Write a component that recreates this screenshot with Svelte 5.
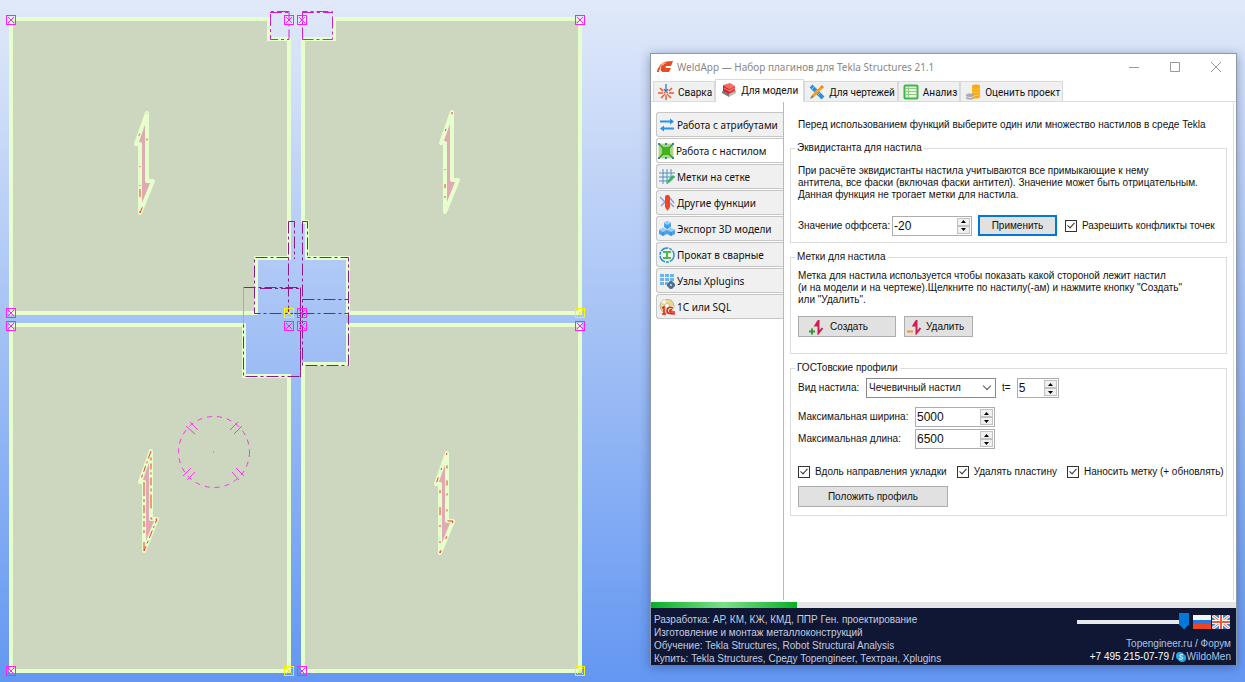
<script>
	const handles = [
		[11, 20, "m"],
		[289, 20, "m"],
		[302, 20, "m"],
		[580, 20, "m"],
		[11, 313, "m"],
		[289, 313, "y"],
		[302, 313, "m"],
		[580, 313, "y"],
		[11, 326, "m"],
		[289, 326, "m"],
		[302, 326, "m"],
		[580, 326, "m"],
		[11, 671, "m"],
		[289, 671, "y"],
		[302, 671, "m"],
		[580, 671, "y"],
	]

	const plates = [
		"M11 19H269V39H289V258H256V313H11Z",
		"M334 19H580V313H348V258H307V222H303V39H334Z",
		"M11 325H244V376H289V671H11Z",
		"M348 325H580V671H303V364H348Z",
	]

	const arrows = [
		{x: 147, y: 113, dash: "0 22 2 35 1 18 1 3 8 14 8 75 2 25 6 200"},
		{x: 452, y: 112, dash: "0 18 2 43 1 14 4 8 2 120 6 3 24 2 12 3 8 200"},
		{x: 151, y: 451, dash: "8 3 2 3 6 3 3 9 14 3 3 3"},
		{x: 447, y: 453, dash: "2 14 2 8 5 12 3 14 8 10"},
	]

	const tabs = [
		{id: "weld", label: "Сварка"},
		{id: "model", label: "Для модели"},
		{id: "drawing", label: "Для чертежей"},
		{id: "analysis", label: "Анализ"},
		{id: "estimate", label: "Оценить проект"},
	]

	const sections = [
		{id: "attributes", label: "Работа с атрибутами"},
		{id: "deck", label: "Работа с настилом"},
		{id: "grid", label: "Метки на сетке"},
		{id: "other", label: "Другие функции"},
		{id: "export", label: "Экспорт 3D модели"},
		{id: "rolled", label: "Прокат в сварные"},
		{id: "nodes", label: "Узлы Xplugins"},
		{id: "sql", label: "1С или SQL"},
	]

	let activeTab = $state("model")
	let activeSection = $state("deck")
	let values = $state({offset: -20, thickness: 5, width: 5000, length: 6500})
	let resolveConflicts = $state(true)
	let alongLaying = $state(true)
	let removePlate = $state(true)
	let applyMark = $state(true)
	let deckType = $state("lentil")
	let opacity = $state(100)
	let progress = $state(25)
</script>

{#snippet icon(id)}
	<svg class="icon" viewBox="0 0 16 16" aria-hidden="true">
		{#if id === "weld"}
			<path d="M8 0V7M6 5L8 8L10 5" stroke="#2f7fc0" stroke-width="1.300" fill="none" />
			<path
				d="M0 9H5M11 9H16M2 4L5 7M14 4L11 7M3 14L6 11M13 14L10 11M8 12V16"
				stroke="#f4552d"
				stroke-width="1.500"
			/>
			<circle cx="8" cy="9.500" r="1.800" fill="none" stroke="#f4552d" />
		{:else if id === "model"}
			<path d="M1 9L8 6L15 9L8 14Z" fill="#a3a3a3" />
			<path d="M1 9L8 12V15L1 11Z" fill="#777" />
			<path d="M8 12L15 9V11L8 15Z" fill="#bbb" />
			<path d="M2 3L9 1L14 4L8 7Z" fill="#f96a62" />
			<path d="M2 3L8 7V12L2 9Z" fill="#c9272d" />
			<path d="M8 7L14 4V9L8 12Z" fill="#e53e3e" />
			<path d="M3 6L8 9L14 6" stroke="#fb8984" fill="none" />
		{:else if id === "drawing"}
			<path d="M2 2L14 14" stroke="#2a91e0" stroke-width="4" />
			<path d="M3 5L5 3M6 8L8 6M9 11L11 9" stroke="#8cc8f5" />
			<path d="M14 2L4 12" stroke="#f8a019" stroke-width="3" />
			<path d="M3 11L5 13L1 15Z" fill="#697684" />
			<path d="M12 2L14 4" stroke="#fa6f5b" stroke-width="1.500" />
		{:else if id === "analysis"}
			<rect x="1.500" y="1.500" width="13" height="13" rx="1" fill="#eaf3dc" stroke="#43b649" stroke-width="2" />
			<path d="M5.500 2V14M2 4.500H14M2 7.500H14M2 10.500H14" stroke="#8ecb86" />
		{:else if id === "estimate"}
			<path d="M7 2C7 0 15 0 15 2V13C15 15 7 15 7 13Z" fill="#fbaa13" />
			<path d="M7 4C8 6 14 6 15 4M7 7C8 9 14 9 15 7M7 10C8 12 14 12 15 10" fill="none" stroke="#ffd148" />
			<path d="M1 11C1 9 9 9 9 11V14C9 16 1 16 1 14Z" fill="#a9abae" />
			<path d="M1 12C2 14 8 14 9 12" fill="none" stroke="#e5e5e5" />
		{:else if id === "attributes"}
			<path d="M1 4.500H12M4 11.500H15" stroke="#2492ef" stroke-width="2" />
			<path d="M11 1.500L15 4.500L11 7.500ZM5 8.500L1 11.500L5 14.500Z" fill="#2492ef" />
		{:else if id === "deck"}
			<rect x="1" y="1" width="14" height="14" fill="#a5d87e" stroke="#b7d9a2" />
			<rect x="4" y="4" width="8" height="8" fill="#44b321" />
			<path d="M1 1L15 15M15 1L1 15" stroke="#3a9c26" stroke-width="1.500" />
			<rect x="5" y="5" width="6" height="6" fill="#44b321" />
			<path d="M0 0H2V2H0ZM14 0H16V2H14ZM0 14H2V16H0ZM14 14H16V16H14ZM7 0H9V2H7ZM7 14H9V16H7Z" fill="#3181a5" />
		{:else if id === "grid"}
			<path d="M4 0V15M8 0V15M12 0V9M0 4H16M0 8H16M0 12H9" stroke="#4f91bd" />
			<path d="M8 15L9 11L14 6L16 8L11 13Z" fill="#3cb35d" />
		{:else if id === "other"}
			<path d="M1 2L7 8M15 12L11 8M2 11L6 7M11 3L15 8" stroke="#969bd2" stroke-width="1.500" />
			<rect x="6" y="0" width="5" height="11" rx="2" fill="#f44426" />
			<path d="M6 9H11V12L8.500 16L6 12Z" fill="#f44426" />
		{:else if id === "export"}
			<path d="M5 2L8 0L12 2V6L8 8L5 6ZM0 9L4 7L8 9V13L4 15L0 13ZM8 9L12 7L16 9V13L12 15L8 13Z" fill="#4aa2e8" />
			<path d="M5 2L8 4L12 2L8 0ZM0 9L4 11L8 9L4 7ZM8 9L12 11L16 9L12 7Z" fill="#99d0fb" />
			<path d="M8 4V8M4 11V15M12 11V15" stroke="#2f7fc8" stroke-width="0.700" />
		{:else if id === "rolled"}
			<circle cx="8" cy="8" r="7" fill="none" stroke="#2492d8" stroke-width="1.500" stroke-dasharray="8 1 3 1" />
			<path d="M4 4H12V6H9V10H12V12H4V10H7V6H4Z" fill="#52b650" />
		{:else if id === "nodes"}
			<path d="M1 1H5V4H1ZM6 1H10V4H6ZM11 1H15V4H11ZM1 5H5V8H1ZM6 5H10V8H6ZM11 5H15V8H11ZM1 9H5V12H1ZM6 9H9V12H6Z" fill="#6eb2ed" />
			<path d="M11 8H13L16 11V13L13 16H11L8 13V11Z" fill="#50718b" />
			<circle cx="12" cy="12" r="1" fill="#d7e3ea" />
		{:else if id === "sql"}
			<circle cx="8" cy="7" r="7" fill="#e9d98c" stroke="#b8b19c" />
			<path d="M8 7L2 3L6 0ZM8 7L14 11L15 7Z" fill="#f7f3dd" />
			<circle cx="8" cy="7" r="2.500" fill="#fff" stroke="#c0bda7" />
			<path d="M3 9L5 8V15M3 15H7M14 9C10 7 8 9 8 12C8 15 12 15 16 15M13 11C10 10 10 13 13 13H16" fill="none" stroke="#e3231c" stroke-width="1.500" />
		{/if}
	</svg>
{/snippet}

{#snippet markIcon(sign)}
	<svg class="mark" viewBox="0 0 16 16" aria-hidden="true">
		<path d="M9.500 1V14L13.500 9M9.500 1.500L6.500 6.500H9" stroke="#cf1f55" stroke-width="2" fill="none" />
		{#if sign === "plus"}
			<path d="M0 12.500H6M3 9.500V15.500" stroke="#369b31" stroke-width="2" />
		{:else}
			<path d="M0 12.500H6" stroke="#f7942a" stroke-width="2" />
		{/if}
	</svg>
{/snippet}

{#snippet spinner(id, key)}
	<span class="spinner {key}">
		<input {id} type="number" bind:value={values[key]} />
		<span class="steps">
			<button aria-label="Больше" onclick={() => (values[key] += 1)}>
				<svg viewBox="0 0 7 4"><path d="M0 4L3.500 0L7 4Z" /></svg>
			</button>
			<button aria-label="Меньше" onclick={() => (values[key] -= 1)}>
				<svg viewBox="0 0 7 4"><path d="M0 0L3.500 4L7 0Z" /></svg>
			</button>
		</span>
	</span>
{/snippet}

<div class="desktop">
	<svg class="scene" viewBox="0 0 588 682" aria-hidden="true">
		{#each plates as d}
			<path {d} class="plate" />
		{/each}

		<!-- Cut parts around the column -->
		<g class="cut light">
			<path d="M289 11.500H270.500V39.500H289ZM302.500 39.500V11.500H332.500V39.500Z" />
			<path d="M270 12.500H289M302 12.500H332" />
		</g>
		<g class="cut">
			<path d="M288.500 221.500H294.500V259M288.500 221.500V313M302.500 221.500H307.500V257.500" />
			<path d="M288.500 257.500H254.500V313.500H302" />
			<path d="M302.500 221.500V365.500H348.500V257.500H307.500" />
			<path d="M243.500 287.500H300.500V376.500H243.500Z" />
			<path d="M302.500 299.500H348M302.500 313.500H348M260 288.500H300M300.500 290V377" />
		</g>
		<path d="M243.500 287V325" class="ghost" />

		{#each arrows as a}
			<g transform="translate({a.x} {a.y})">
				<path d="M0 0L-11 31H-7V100L6 68H0Z" class="arrow" />
				<path d="M0 0L-11 31H-7V100L6 68H0Z" class="arrow-dash" stroke-dasharray={a.dash} />
			</g>
		{/each}

		<g class="round">
			<circle cx="214" cy="452" r="35.500" stroke-dasharray="5 5" />
			<path d="M186 426L195 434M190 422L198 430M230 430L238 422M234 434L242 426" />
			<path d="M183 476L191 468M187 480L195 472M232 472L239 480M236 468L244 476" />
			<path d="M213 452H214" />
		</g>

		{#each handles as [x, y, kind]}
			<g class="handle {kind}" transform="translate({x} {y})">
				<rect x="-4.500" y="-4.500" width="9" height="9" />
				<path d="M-3 -3L3 3M3 -3L-3 3" />
			</g>
		{/each}
	</svg>

	<main class="window">
		<header class="titlebar">
			<svg class="icon" viewBox="0 0 16 16" aria-hidden="true">
				<path d="M0 13C1 5 6 2 16 2L14 7H10C8 7 8 9 10 9H14L12 13H7C4 13 3 11 4 8C3 9 2 11 2 13Z" fill="#e64d20" />
				<path d="M1 9C3 5 5 4 9 4M3 9C4 6 5 6 7 5" stroke="#fff" stroke-width="0.700" fill="none" />
			</svg>
			<h1>WeldApp — Набор плагинов для Tekla Structures 21.1</h1>
			<div class="window-buttons">
				<button aria-label="Свернуть">
					<svg viewBox="0 0 10 10"><path d="M0 5.500H10" /></svg>
				</button>
				<button aria-label="Развернуть">
					<svg viewBox="0 0 10 10"><path d="M0.500 0.500H9.500V9.500H0.500Z" /></svg>
				</button>
				<button aria-label="Закрыть">
					<svg viewBox="0 0 10 10"><path d="M0 0L10 10M10 0L0 10" /></svg>
				</button>
			</div>
		</header>

		<nav class="tabs">
			{#each tabs as tab}
				<button class="tab" class:active={activeTab === tab.id} onclick={() => (activeTab = tab.id)}>
					{@render icon(tab.id)}
					{tab.label}
				</button>
			{/each}
		</nav>

		<div class="page">
			<nav class="sections">
				{#each sections as section}
					<button
						class="section"
						class:active={activeSection === section.id}
						onclick={() => (activeSection = section.id)}
					>
						{@render icon(section.id)}
						{section.label}
					</button>
				{/each}
			</nav>

			<div class="content">
				<p class="hint">Перед использованием функций выберите один или множество настилов в среде Tekla</p>

				<fieldset class="equidistant">
					<legend>Эквидистанта для настила</legend>
					<p>
						При расчёте эквидистанты настила учитываются все примыкающие к нему<br />
						антитела, все фаски (включая фаски антител). Значение может быть отрицательным.<br />
						Данная функция не трогает метки для настила.
					</p>
					<div class="row">
						<label class="offset-label" for="offset">Значение оффсета:</label>
						{@render spinner("offset", "offset")}
						<button class="btn primary">Применить</button>
						<label class="check">
							<input type="checkbox" bind:checked={resolveConflicts} />
							Разрешить конфликты точек
						</label>
					</div>
				</fieldset>

				<fieldset class="marks">
					<legend>Метки для настила</legend>
					<p>
						Метка для настила используется чтобы показать какой стороной лежит настил<br />
						(и на модели и на чертеже).Щелкните по настилу(-ам) и нажмите кнопку "Создать"<br />
						или "Удалить".
					</p>
					<div class="row">
						<button class="btn create">{@render markIcon("plus")}Создать</button>
						<button class="btn remove">{@render markIcon("minus")}Удалить</button>
					</div>
				</fieldset>

				<fieldset class="profiles">
					<legend>ГОСТовские профили</legend>
					<div class="row">
						<label class="kind" for="deck-type">Вид настила:</label>
						<span class="select">
							<select id="deck-type" bind:value={deckType}>
								<option value="lentil">Чечевичный настил</option>
								<option value="rhombus">Ромбический настил</option>
							</select>
						</span>
						<label for="thickness">t=</label>
						{@render spinner("thickness", "thickness")}
					</div>
					<div class="sizes">
						<label for="max-width">Максимальная ширина:</label>
						{@render spinner("max-width", "width")}
						<label for="max-length">Максимальная длина:</label>
						{@render spinner("max-length", "length")}
					</div>
					<div class="checks">
						<label class="check">
							<input type="checkbox" bind:checked={alongLaying} />
							Вдоль направления укладки
						</label>
						<label class="check">
							<input type="checkbox" bind:checked={removePlate} />
							Удалять пластину
						</label>
						<label class="check">
							<input type="checkbox" bind:checked={applyMark} />
							Наносить метку (+ обновлять)
						</label>
					</div>
					<button class="btn put">Положить профиль</button>
				</fieldset>
			</div>
		</div>

		<div class="progress">
			<div class="bar" style="width: {progress}%"></div>
		</div>

		<footer class="footer">
			<p>
				Разработка: АР, КМ, КЖ, КМД, ППР Ген. проектирование<br />
				Изготовление и монтаж металлоконструкций<br />
				Обучение: Tekla Structures, Robot Structural Analysis<br />
				Купить: Tekla Structures, Среду Topengineer, Техтран, Xplugins
			</p>
			<div class="contacts">
				<div class="controls">
					<input type="range" min="0" max="100" aria-label="Прозрачность окна" bind:value={opacity} />
					<button class="flag" aria-label="Русский">
						<svg viewBox="0 0 18 14">
							<path d="M0 0H18V5H0Z" fill="#f5f5f5" />
							<path d="M0 5H18V10H0Z" fill="#2b78e0" />
							<path d="M0 9H18V14H0Z" fill="#ef4523" />
						</svg>
					</button>
					<button class="flag" aria-label="English">
						<svg viewBox="0 0 18 14">
							<path d="M0 0H18V14H0Z" fill="#2a86d8" />
							<path d="M0 0L18 14M18 0L0 14" stroke="#fff" stroke-width="3" />
							<path d="M0 0L18 14M18 0L0 14" stroke="#f05a3c" />
							<path d="M9 0V14M0 7H18" stroke="#fff" stroke-width="4" />
							<path d="M9 0V14M0 7H18" stroke="#f05a3c" stroke-width="2" />
						</svg>
					</button>
				</div>
				<div><a href="#site">Topengineer.ru</a> / <a href="#forum">Форум</a></div>
				<div class="phone">
					+7 495 215-07-79 /
					<svg class="skype" viewBox="0 0 10 10" aria-hidden="true">
						<circle cx="4" cy="4" r="4" fill="#22a9ea" />
						<circle cx="6" cy="6" r="4" fill="#22a9ea" />
						<path d="M7 3C5 2 3 3 4 4.500C5 5 7 5 6.500 6.500C6 7.500 4 7.500 3 6.500" stroke="#fff" fill="none" />
					</svg>
					<a href="#skype">WildoMen</a>
				</div>
			</div>
		</footer>
	</main>
</div>

<style>
	:global(body) {
		margin: 0;
	}

	.desktop {
		display: grid;
		grid-template-columns: minmax(0, 588fr) minmax(0, 587fr);
		column-gap: 62px;
		align-items: start;
		min-height: 100vh;
		box-sizing: border-box;
		padding-right: 8px;
		background: linear-gradient(#e1e9f9, #6397f2);
		font-family: "Liberation Sans", Arial, sans-serif;
		font-size: 10px;
		line-height: 12px;
		color: #111;
	}

	.scene {
		display: block;
		width: 100%;
	}

	.plate {
		fill: #cdd6bf;
		stroke: #e6ffcc;
		stroke-width: 4;
	}

	.cut {
		fill: none;
		stroke: #8b1a8b;
		stroke-dasharray: 12 3 3 3;
	}

	.cut.light {
		stroke: #d21ed2;
	}

	.ghost {
		stroke: #a3aeb4;
	}

	.arrow {
		fill: #dfaab2;
		stroke: #e6ffcc;
		stroke-width: 4;
		stroke-linejoin: round;
	}

	.arrow-dash {
		fill: none;
		stroke: #f03c28;
	}

	.round {
		fill: none;
		stroke: #f03ce6;
	}

	.handle {
		fill: none;
		stroke: #ff1cff;
	}

	.handle.y {
		stroke: #f8f400;
	}

	.window {
		display: flex;
		flex-direction: column;
		min-width: 0;
		min-height: calc(100vh - 70px);
		box-sizing: border-box;
		margin: 53px 0 17px;
		border: 1px solid #8d97a8;
		border-bottom: none;
		background: #fff;
		box-shadow: 0 2px 10px rgba(20, 40, 90, 0.4);
	}

	button {
		padding: 0;
		font: inherit;
		color: inherit;
	}

	p {
		margin: 0;
		white-space: nowrap;
	}

	.icon {
		flex: none;
		width: 16px;
		height: 16px;
	}

	.titlebar {
		display: flex;
		align-items: center;
		gap: 4px;
		height: 26px;
		padding-left: 6px;
	}

	.titlebar h1 {
		flex: 1;
		margin: 0;
		font: 10px "Noto Sans", "Open Sans", sans-serif;
		color: #888;
	}

	.window-buttons {
		display: flex;
	}

	.window-buttons button {
		width: 41px;
		height: 24px;
		border: none;
		background: none;
	}

	.window-buttons svg {
		display: block;
		width: 10px;
		height: 10px;
		margin: auto;
		fill: none;
		stroke: #999;
	}

	.tabs {
		display: flex;
		align-items: flex-end;
		height: 21px;
		padding-left: 2px;
		border-bottom: 1px solid #dcdcdc;
	}

	.tab {
		display: flex;
		align-items: center;
		gap: 4px;
		height: 20px;
		padding: 1px 2px 0 4px;
		border: 1px solid #d9d9d9;
		border-bottom: none;
		background: #f0f0f0;
		font: 10px Roboto, "Open Sans", sans-serif;
	}

	.tab.active {
		height: 23px;
		padding: 0 5px 2px;
		margin-bottom: -1px;
		background: #fff;
	}

	.page {
		display: flex;
		flex: 1;
		margin-right: 2px;
		border-right: 1px solid #dcdcdc;
	}

	.sections {
		display: flex;
		flex-direction: column;
		gap: 1px;
		flex: none;
		width: 127px;
		padding: 10px 0 0 5px;
		border-right: 1px solid #b9b9b9;
	}

	.section {
		display: flex;
		align-items: center;
		gap: 2px;
		height: 25px;
		padding-left: 2px;
		border: 1px solid #c6c6c6;
		border-right: none;
		border-radius: 3px 0 0 3px;
		background: #f0f0f0;
		font: 10px "Noto Sans", "Open Sans", sans-serif;
		white-space: nowrap;
	}

	.section.active {
		padding-left: 1px;
		background: #fff;
	}

	.content {
		display: flex;
		flex-direction: column;
		gap: 7px;
		flex: 1;
		min-width: 0;
		padding: 16px 6px 0;
	}

	.hint {
		padding: 1px 8px 3px;
	}

	fieldset {
		min-width: 0;
		margin: 0;
		padding: 0 7px;
		border: 1px solid #dcdcdc;
	}

	legend {
		padding: 0 2px;
		margin-left: -3px;
		line-height: 14px;
	}

	.row {
		display: flex;
		align-items: center;
		gap: 6px;
	}

	.equidistant {
		padding-top: 10px;
		padding-bottom: 6px;
	}

	.equidistant .row {
		margin-top: 14px;
	}

	.offset-label {
		width: 88px;
		white-space: nowrap;
	}

	.marks {
		padding-top: 6px;
		padding-bottom: 16px;
	}

	.marks .row {
		gap: 8px;
		margin-top: 10px;
	}

	.profiles {
		padding-top: 3px;
		padding-bottom: 8px;
	}

	.spinner {
		display: flex;
		box-sizing: border-box;
		width: 80px;
		height: 20px;
		border: 1px solid #abadb3;
		background: #fff;
	}

	.spinner.thickness {
		width: 42px;
	}

	.spinner input {
		flex: 1;
		min-width: 0;
		padding: 0 1px;
		border: none;
		outline: none;
		background: none;
		font: 12px "Liberation Sans", Arial, sans-serif;
		color: #111;
		appearance: textfield;
	}

	.spinner input::-webkit-inner-spin-button {
		display: none;
	}

	.steps {
		display: grid;
		grid-template-rows: 1fr 1fr;
		width: 13px;
		padding: 1px;
	}

	.steps button {
		display: flex;
		align-items: center;
		justify-content: center;
		min-height: 0;
		border: 1px solid #c2c2c2;
		background: #f0f0f0;
	}

	.steps svg {
		width: 5px;
		height: 3px;
	}

	.btn {
		height: 21px;
		border: 1px solid #adadad;
		background: #e1e1e1;
	}

	.btn.primary {
		width: 79px;
		border: 2px solid #0078d7;
	}

	.btn.create,
	.btn.remove {
		display: flex;
		align-items: center;
		width: 98px;
		padding-left: 10px;
		gap: 5px;
	}

	.btn.remove {
		width: 69px;
		padding-left: 2px;
		gap: 3px;
	}

	.btn.put {
		display: block;
		width: 150px;
	}

	.mark {
		width: 16px;
		height: 16px;
	}

	.check {
		display: flex;
		align-items: center;
		gap: 5px;
		white-space: nowrap;
	}

	.check input {
		flex: none;
		width: 12px;
		height: 12px;
		margin: 0;
		border: 1px solid #333;
		background: #fff;
		appearance: none;
	}

	.check input:checked::after {
		content: "";
		display: block;
		width: 3px;
		height: 6px;
		margin: 0 0 0 3px;
		border: solid #333;
		border-width: 0 1px 1px 0;
		transform: rotate(42deg);
	}

	.equidistant .check {
		margin-left: 2px;
	}

	.kind {
		width: 62px;
		white-space: nowrap;
	}

	.select {
		position: relative;
		width: 130px;
		height: 20px;
	}

	.select::after {
		content: "";
		position: absolute;
		top: 5px;
		right: 6px;
		width: 5px;
		height: 5px;
		border: solid #555;
		border-width: 0 1px 1px 0;
		transform: rotate(45deg);
		pointer-events: none;
	}

	select {
		width: 100%;
		height: 100%;
		padding: 0 2px;
		border: 1px solid #8a8a8a;
		border-radius: 0;
		background: #fff;
		font: inherit;
		color: inherit;
		appearance: none;
	}

	.sizes {
		display: grid;
		grid-template-columns: 117px max-content;
		align-items: center;
		row-gap: 2px;
		margin: 9px 0 17px;
		white-space: nowrap;
	}

	.checks {
		display: flex;
		gap: 10px;
		margin-bottom: 8px;
	}

	.progress {
		height: 6px;
		margin-top: 2px;
		background: #e6e6e6;
	}

	.bar {
		height: 100%;
		background: linear-gradient(90deg, #06b025, #7be08b 50%, #06b025);
	}

	.footer {
		display: flex;
		justify-content: space-between;
		padding: 5px 5px 0 3px;
		background: #0f1734;
		line-height: 13px;
		color: #c3cce0;
	}

	.contacts {
		display: flex;
		flex-direction: column;
		align-items: flex-end;
		white-space: nowrap;
	}

	.contacts a {
		color: #a9c4e6;
		text-decoration: none;
	}

	.controls {
		display: flex;
		align-items: center;
		height: 17px;
		margin-bottom: 7px;
	}

	.controls input {
		width: 112px;
		height: 17px;
		margin: 0 4px 0 0;
		background: none;
		appearance: none;
	}

	.controls input::-webkit-slider-runnable-track {
		height: 4px;
		background: #e7eaea;
	}

	.controls input::-webkit-slider-thumb {
		width: 10px;
		height: 17px;
		margin-top: -7px;
		background: #0078d7;
		clip-path: polygon(0 0, 100% 0, 100% 70%, 50% 100%, 0 70%);
		appearance: none;
	}

	.flag {
		width: 19px;
		height: 15px;
		border: none;
		background: none;
	}

	.flag svg {
		display: block;
		width: 18px;
		height: 14px;
	}

	.phone {
		display: flex;
		align-items: center;
		gap: 1px;
		color: #fff;
	}

	.skype {
		width: 10px;
		height: 10px;
	}
</style>
